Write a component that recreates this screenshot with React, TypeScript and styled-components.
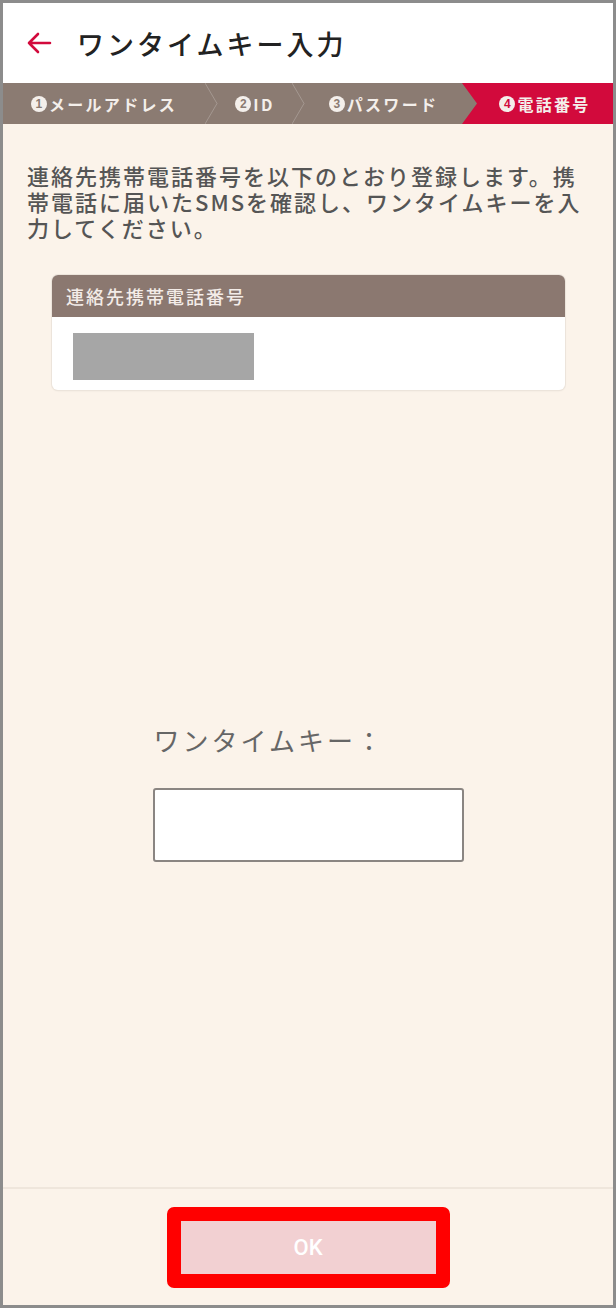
import styled, { createGlobalStyle } from 'styled-components'

const GlobalStyle = createGlobalStyle`
  html, body {
    margin: 0;
    padding: 0;
    background: #ffffff;
  }
  body {
    font-family: "Noto Sans CJK JP", "Noto Sans", sans-serif;
  }
`

const Frame = styled.div`
  box-sizing: border-box;
  width: 616px;
  height: 1308px;
  border: 3px solid #8c8c8c;
  display: flex;
  flex-direction: column;
  background: #fbf3ea;
  overflow: hidden;
`

const Header = styled.header`
  height: 80px;
  background: #ffffff;
  display: flex;
  align-items: center;
  padding-left: 22px;
  gap: 24px;
`

const BackButton = styled.button`
  border: none;
  background: none;
  padding: 0;
  width: 28px;
  height: 28px;
  display: flex;
  align-items: center;
  justify-content: center;
`

const Title = styled.h1`
  margin: 0;
  font-size: 27px;
  font-weight: 500;
  letter-spacing: 3px;
  color: #222;
`

const StepBar = styled.nav`
  height: 41px;
  background: #8b7b72;
  display: flex;
  align-items: stretch;
`

const Step = styled.div<{ $width: number; $active?: boolean }>`
  width: ${({ $width }) => $width}px;
  flex: none;
  display: flex;
  align-items: center;
  justify-content: center;
  color: #f4efeb;
  font-size: 16px;
  font-weight: 700;
  letter-spacing: 2.3px;
  background: ${({ $active }) => ($active ? '#d20a3c' : 'transparent')};
  clip-path: ${({ $active }) =>
    $active ? 'polygon(0 0, 100% 0, 100% 100%, 0 100%, 15px 50%)' : 'none'};
  padding-left: ${({ $active }) => ($active ? '15px' : '0')};
  box-sizing: border-box;
`

const Badge = styled.span<{ $color: string }>`
  width: 16px;
  height: 16px;
  border-radius: 50%;
  background: #f4efeb;
  color: ${({ $color }) => $color};
  font-family: "Liberation Sans", sans-serif;
  font-size: 12px;
  font-weight: 700;
  letter-spacing: 0;
  display: inline-flex;
  align-items: center;
  justify-content: center;
  margin-right: 2px;
`

const Chevron = styled.svg`
  width: 13px;
  height: 41px;
  flex: none;
`

const Main = styled.main`
  flex: 1;
  padding: 38px 24px 0 24px;
  display: flex;
  flex-direction: column;
`

const Lead = styled.p`
  margin: 0;
  font-size: 22px;
  line-height: 26px;
  letter-spacing: 2px;
  color: #555;
  font-weight: 500;
`

const Card = styled.section`
  margin: 35px 24px 0 25px;
  border-radius: 6px;
  overflow: hidden;
  background: #ffffff;
  box-shadow: 0 0 0 1px #ece4db, 0 1px 2px rgba(0, 0, 0, 0.08);
`

const CardHead = styled.div`
  height: 42px;
  background: #8b7870;
  color: #f3ece8;
  font-size: 18px;
  letter-spacing: 2px;
  display: flex;
  align-items: center;
  padding-left: 14px;
  font-weight: 500;
`

const CardBody = styled.div`
  height: 73px;
  padding: 16px 21px;
  box-sizing: border-box;
`

const Masked = styled.div`
  width: 181px;
  height: 47px;
  background: #a6a6a6;
`

const KeyBlock = styled.div`
  width: 311px;
  margin: 332px auto 0;
  display: flex;
  flex-direction: column;
`

const KeyLabel = styled.label`
  font-size: 26px;
  line-height: 36px;
  letter-spacing: 3px;
  color: #666;
  padding-left: 1px;
`

const KeyInput = styled.input`
  margin-top: 30px;
  box-sizing: border-box;
  width: 311px;
  height: 74px;
  border: 2px solid #8a8582;
  border-radius: 3px;
  background: #fff;
  outline: none;
`

const Footer = styled.footer`
  box-sizing: border-box;
  height: 118px;
  flex: none;
  border-top: 2px solid #efe6dc;
  display: flex;
  justify-content: center;
  align-items: flex-start;
  padding-top: 18px;
`

const OkButton = styled.button`
  box-sizing: border-box;
  width: 283px;
  height: 81px;
  border: 14px solid #ff0000;
  border-radius: 7px;
  background: #f2d0d2;
  background-clip: padding-box;
  color: #ffffff;
  font-family: "Roboto", "Noto Sans", sans-serif;
  font-size: 22px;
  font-weight: 500;
`

const steps = [
  { n: '1', label: 'メールアドレス', width: 202 },
  { n: '2', label: 'ID', width: 74 },
  { n: '3', label: 'パスワード', width: 157 },
]

const Sep = () => (
  <Chevron viewBox="0 0 13 41">
    <polyline points="0,0 12,20.5 0,41" fill="none" stroke="rgba(255,255,255,0.22)" strokeWidth="1" />
  </Chevron>
)

const App = () => {
  return (
    <>
      <GlobalStyle />
      <Frame>
        <Header>
          <BackButton aria-label="戻る">
            <svg width="26" height="24" viewBox="0 0 26 24" fill="none">
              <path d="M24 12H3M12 3L3 12l9 9" stroke="#d20a3c" strokeWidth="2.6" strokeLinecap="round" strokeLinejoin="round" />
            </svg>
          </BackButton>
          <Title>ワンタイムキー入力</Title>
        </Header>

        <StepBar>
          {steps.map((s, i) => (
            <>
              <Step key={s.n} $width={s.width}>
                <Badge $color="#8b7b72">{s.n}</Badge>
                {s.label}
              </Step>
              {i < 2 && <Sep key={`sep${i}`} />}
            </>
          ))}
          <Step $width={151} $active>
            <Badge $color="#d20a3c">4</Badge>
            電話番号
          </Step>
        </StepBar>

        <Main>
          <Lead>
            連絡先携帯電話番号を以下のとおり登録します。携<br />
            帯電話に届いたSMSを確認し、ワンタイムキーを入<br />
            力してください。
          </Lead>

          <Card>
            <CardHead>連絡先携帯電話番号</CardHead>
            <CardBody>
              <Masked />
            </CardBody>
          </Card>

          <KeyBlock>
            <KeyLabel htmlFor="onetime">ワンタイムキー：</KeyLabel>
            <KeyInput id="onetime" type="text" />
          </KeyBlock>
        </Main>

        <Footer>
          <OkButton disabled>OK</OkButton>
        </Footer>
      </Frame>
    </>
  )
}

export default App
